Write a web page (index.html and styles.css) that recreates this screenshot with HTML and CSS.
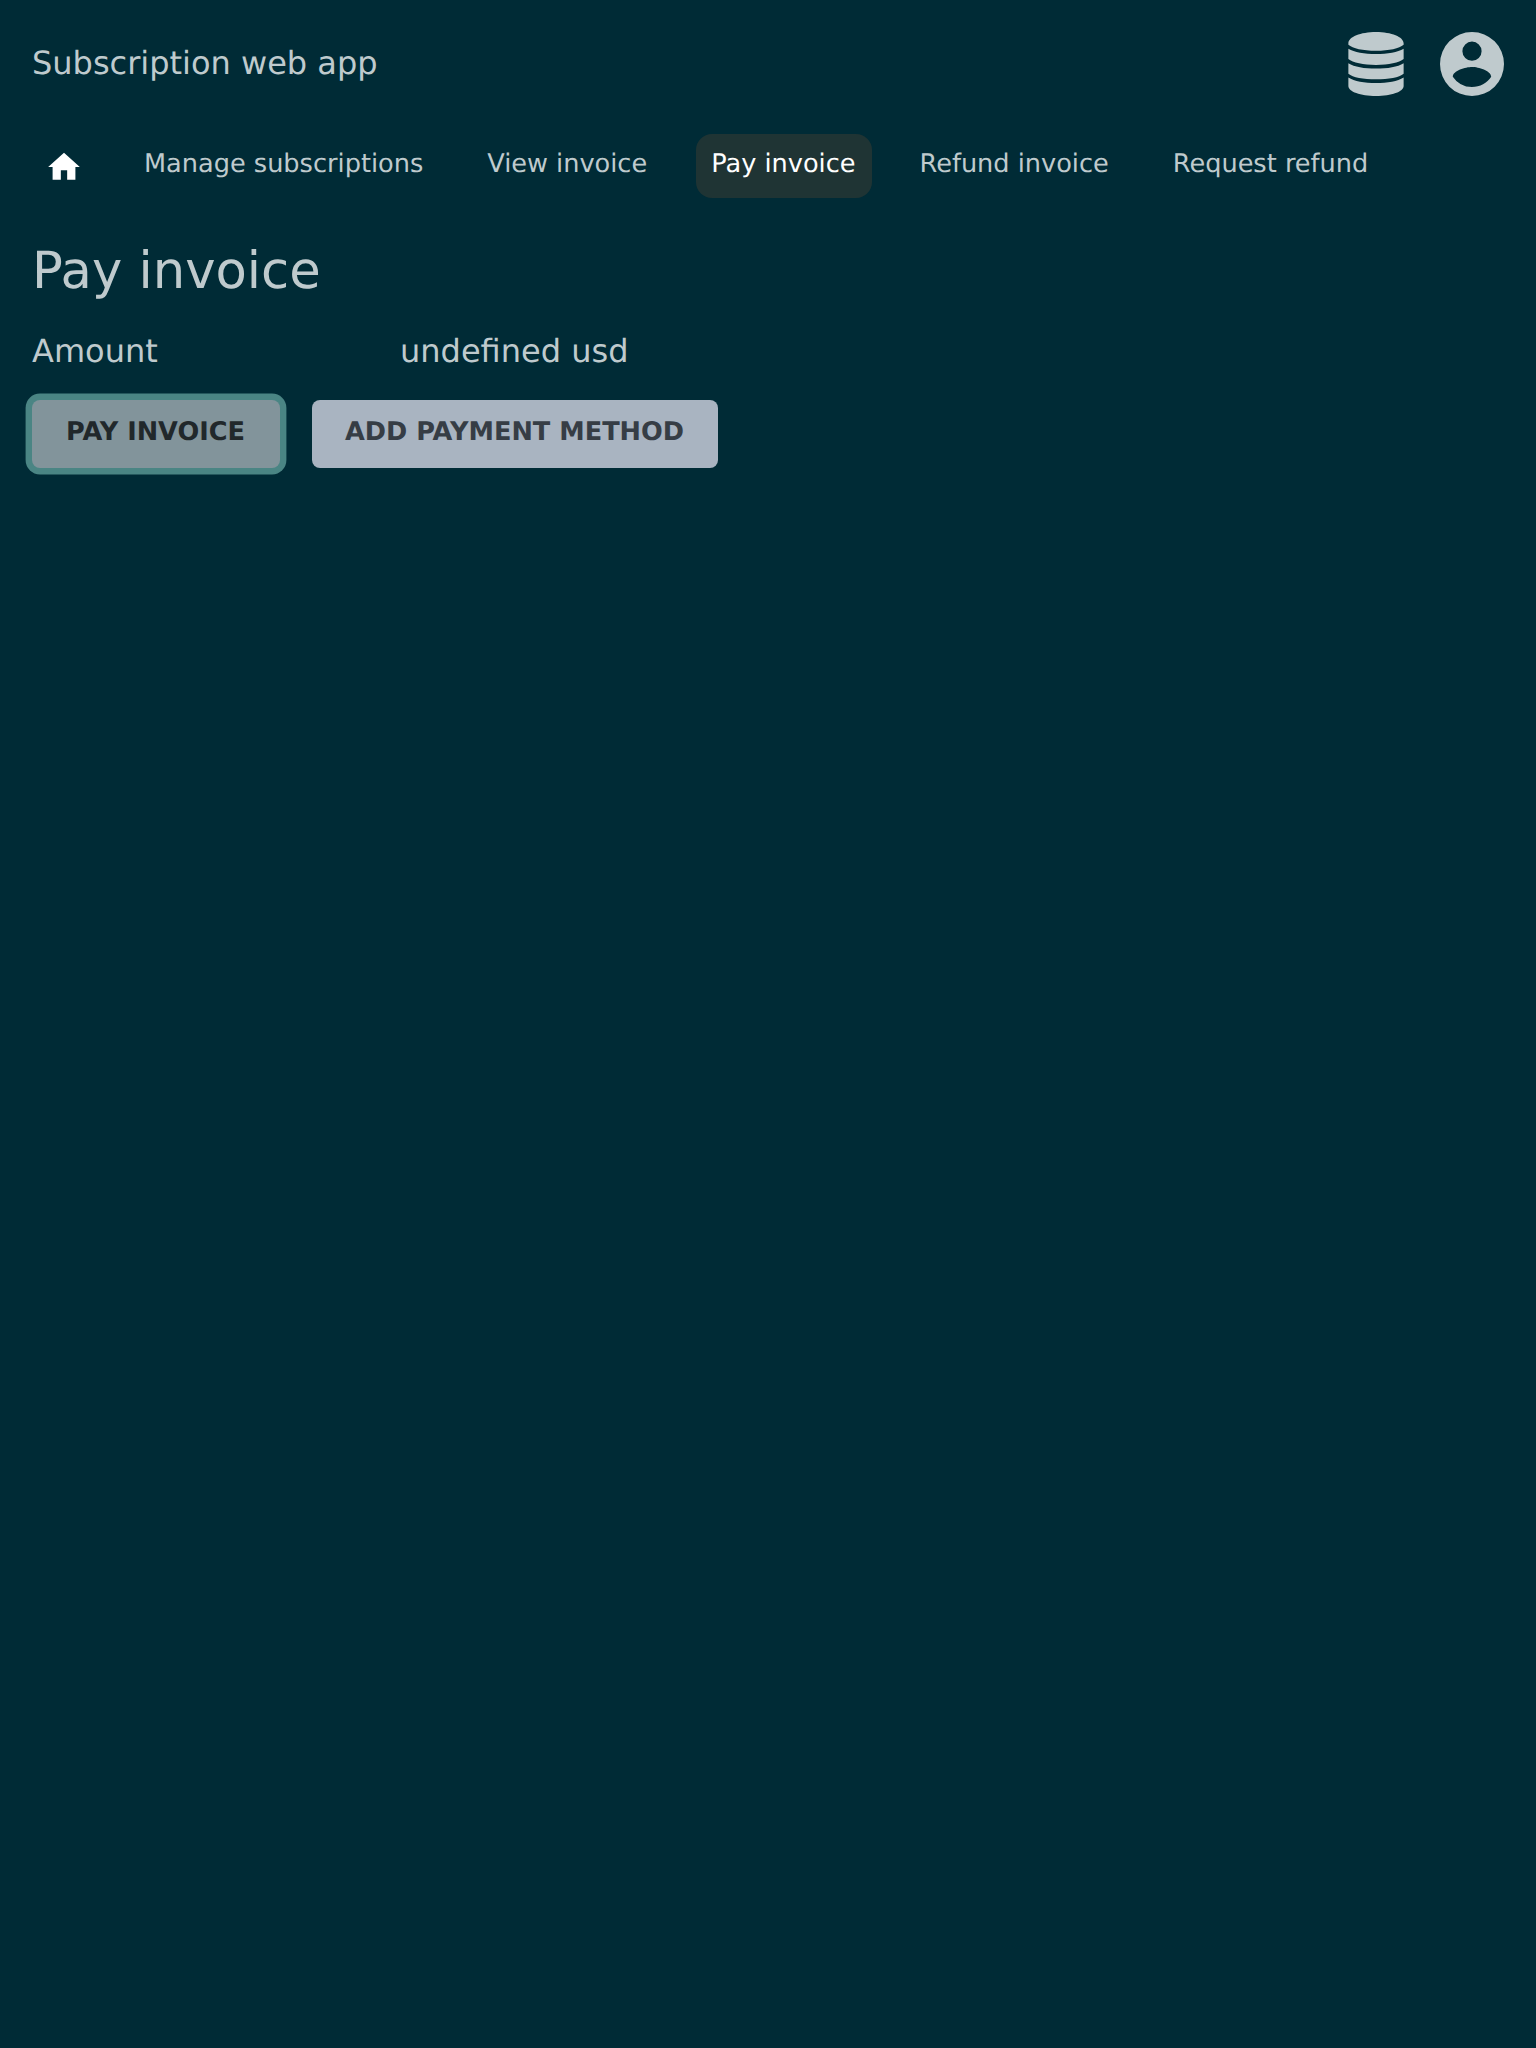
FILE: index.html
```html
<!DOCTYPE html>
<html lang="en">
<head>
<meta charset="utf-8">
<title>Subscription web app</title>
<link rel="stylesheet" href="styles.css">
</head>
<body>
<header class="header">
  <div class="app-name">Subscription web app</div>
  <div class="actions">
    <svg class="icon-db" viewBox="0 0 448 512" aria-hidden="true"><path d="M3 90C3 40 100 0 224 0S445 40 445 90V102C410 133 330 150 224 150S38 133 3 102zM3 134C50 163 130 176 224 176S398 163 445 134V216C410 246 325 263 224 263S38 246 3 216zM3 249C50 279 130 292 224 292S398 279 445 249V333C410 363 325 378 224 378S38 363 3 333zM3 363C50 394 130 407 224 407S398 394 445 363V432C445 477 348 512 224 512S3 477 3 432z"/></svg>
    <svg class="icon-user" viewBox="0 0 64 64" aria-hidden="true"><path fill-rule="evenodd" d="M32 0a32 32 0 1 1 0 64 32 32 0 0 1 0-64zM32 9.600a9.600 9.600 0 1 0 0 19.200 9.600 9.600 0 0 0 0-19.200zM32 55.040c8 0 15.070-4.100 19.200-10.300-.1-6.370-12.800-9.860-19.200-9.860-6.430 0-19.100 3.490-19.200 9.860A23.040 23.040 0 0 0 32 55.040z"/></svg>
  </div>
</header>
<nav class="nav">
  <a class="nav-item home"><svg viewBox="0 0 24 24" aria-hidden="true"><path d="M10 20v-6h4v6h5.200v-8h2.800L12 3 2 12h2.800v8z"/></svg></a>
  <a class="nav-item">Manage subscriptions</a>
  <a class="nav-item">View invoice</a>
  <a class="nav-item active">Pay invoice</a>
  <a class="nav-item">Refund invoice</a>
  <a class="nav-item">Request refund</a>
</nav>
<main class="main">
  <h1 class="heading">Pay invoice</h1>
  <div class="row"><span>Amount</span><span>undefined usd</span></div>
  <div class="buttons">
    <button class="button primary">PAY INVOICE</button>
    <button class="button secondary">ADD PAYMENT METHOD</button>
  </div>
</main>
</body>
</html>
```
FILE: styles.css
```css
* { box-sizing: border-box; }
body {
  margin: 0;
  padding: 32px;
  min-height: 100vh;
  background: #002b36;
  color: #bfcacd;
  font-family: "DejaVu Sans", sans-serif;
  font-size: 32px;
  line-height: 38px;
  text-rendering: geometricPrecision;
}
svg { display: block; fill: currentColor; }
.header {
  display: flex;
  justify-content: space-between;
  align-items: center;
  height: 64px;
}
.app-name { padding-bottom: 2px; }
.actions { display: flex; gap: 36px; }
.icon-db { width: 56px; height: 64px; }
.icon-user { width: 64px; height: 64px; }
.nav {
  display: flex;
  gap: 32px;
  margin-top: 38px;
}
.nav-item {
  height: 64px;
  padding: 15px 16px 0;
  border-radius: 16px;
  font-size: 25.6px;
  line-height: 30px;
  white-space: nowrap;
}
.home { width: 64px; padding: 14px 13px 0; color: #fff; }
.home svg { width: 38px; height: 38px; }
.active {
  margin-left: 0.6px;
  padding-left: 15.4px;
  background: #1f3434;
  color: #fff;
}
.heading {
  margin: 43px 0 0;
  font-size: 51.2px;
  font-weight: 400;
  line-height: 60px;
}
.row {
  display: grid;
  grid-template-columns: 368px auto;
  margin-top: 31px;
}
.buttons { display: flex; gap: 32px; margin-top: 30px; }
.button {
  height: 68px;
  padding: 0 1px 4px 0;
  border: 0;
  border-radius: 8px;
  font: bold 25.6px/30px "DejaVu Sans", sans-serif;
  text-rendering: geometricPrecision;
}
.primary {
  width: 248px;
  background: #82949b;
  color: #21282b;
  box-shadow: 0 0 0 6.4px #4a8584;
}
.secondary { width: 406px; background: #a9b4c1; color: #363d45; }
```
